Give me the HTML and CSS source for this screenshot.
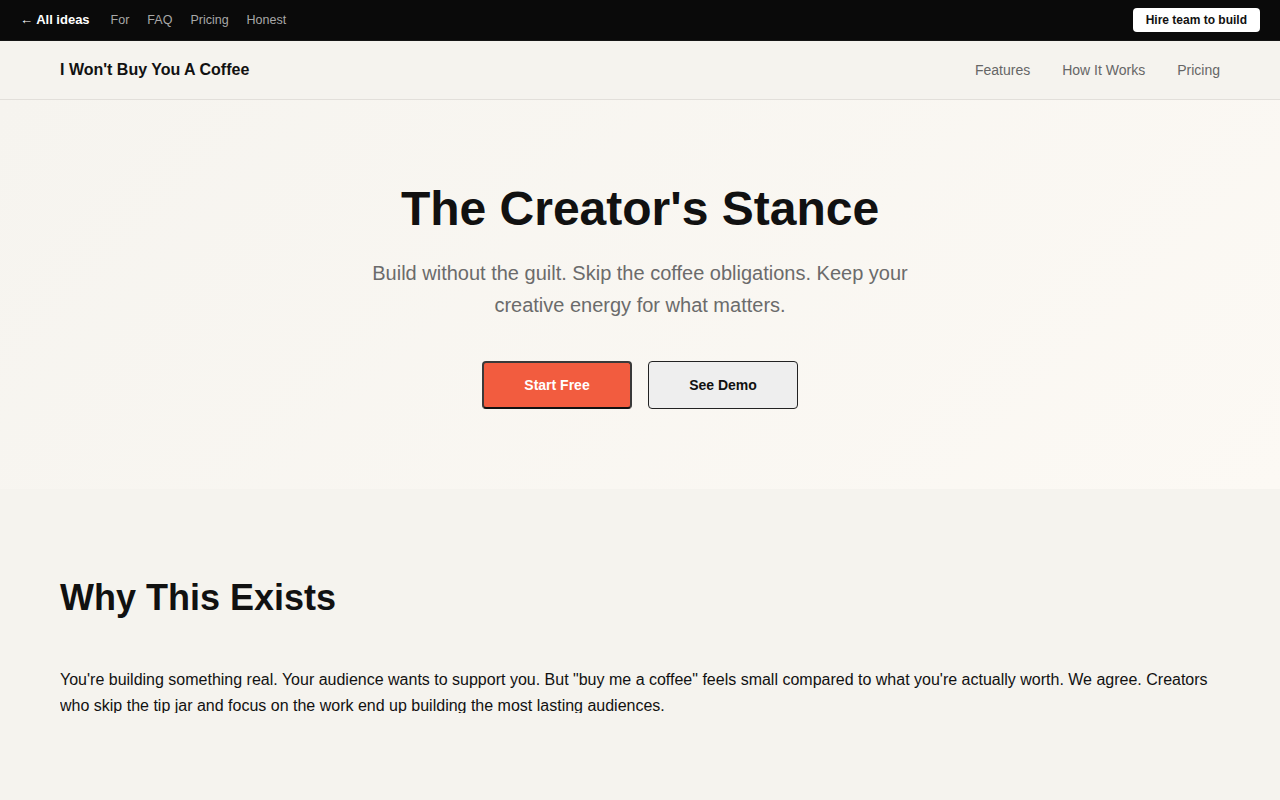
FILE: index.html
```html
<!DOCTYPE html>
<html lang="en">
<head>
    <meta charset="UTF-8">
    <meta name="viewport" content="width=device-width, initial-scale=1.0">
    <title>I Won't Buy You A Coffee</title>
    <link rel="stylesheet" href="styles.css">
</head>
<body>
    <div class="topbar">
        <div class="topbar-links">
            <a href="#" class="back">&larr; All ideas</a>
            <a href="#">For</a>
            <a href="#">FAQ</a>
            <a href="#">Pricing</a>
            <a href="#">Honest</a>
        </div>
        <a href="#" class="hire">Hire team to build</a>
    </div>
    <header class="nav">
        <div class="brand">I Won't Buy You A Coffee</div>
        <nav class="nav-links">
            <a href="#">Features</a>
            <a href="#">How It Works</a>
            <a href="#">Pricing</a>
        </nav>
    </header>
    <section class="hero">
        <h1>The Creator's Stance</h1>
        <p class="sub">Build without the guilt. Skip the coffee obligations. Keep your creative energy for what matters.</p>
        <div class="actions">
            <button class="btn primary">Start Free</button>
            <button class="btn secondary">See Demo</button>
        </div>
    </section>
    <section class="why">
        <h2>Why This Exists</h2>
        <div class="why-text">
            <p>You're building something real. Your audience wants to support you. But "buy me a coffee" feels small compared to what you're actually worth. We agree. Creators who skip the tip jar and focus on the work end up building the most lasting audiences.</p>
        </div>
    </section>
</body>
</html>
```
FILE: styles.css
```css
* {
    box-sizing: border-box;
}

body {
    margin: 0;
    background: #f5f3ee;
    font-family: "Liberation Sans", Arial, sans-serif;
    color: #111;
}

a {
    text-decoration: none;
}

.topbar {
    height: 41px;
    background: #0a0a0a;
    border-bottom: 1px solid #151515;
    display: flex;
    align-items: center;
    justify-content: space-between;
    padding: 0 20px;
    font-size: 12.5px;
}

.topbar-links {
    display: flex;
    align-items: baseline;
    gap: 18px;
    padding-bottom: 2px;
}

.topbar-links a {
    color: #a8a8a8;
}

.topbar-links .back {
    color: #fff;
    font-size: 13px;
    font-weight: bold;
    margin-right: 3px;
}

.hire {
    background: #fff;
    color: #111;
    font-size: 12px;
    font-weight: bold;
    padding: 5px 13px;
    border-radius: 4px;
}

.nav {
    height: 59px;
    display: flex;
    align-items: center;
    justify-content: space-between;
    padding: 0 60px;
    border-bottom: 1px solid #e2dfda;
}

.brand {
    font-size: 16px;
    font-weight: bold;
}

.nav-links {
    display: flex;
    gap: 32px;
}

.nav-links a {
    color: #666;
    font-size: 14px;
}

.hero {
    height: 389px;
    text-align: center;
    padding-top: 81px;
    background: linear-gradient(135deg, #f6f4ef 0%, #fcf9f4 100%);
}

.hero h1 {
    margin: 0;
    font-size: 48px;
    line-height: 56px;
}

.sub {
    width: 560px;
    margin: 20px auto 0;
    font-size: 20px;
    line-height: 32px;
    color: #6b6b6b;
}

.actions {
    display: flex;
    justify-content: center;
    gap: 16px;
    margin-top: 40px;
}

.btn {
    width: 150px;
    height: 48px;
    border-radius: 4px;
    font-family: inherit;
    font-size: 14px;
    font-weight: bold;
    cursor: pointer;
}

.primary {
    background: #f25c3f;
    color: #fff;
    border: 2px solid #3a3a3a;
    border-bottom-color: #111;
}

.secondary {
    background: #eeeeee;
    color: #111;
    border: 1px solid #222;
}

.why {
    padding: 89px 60px 0;
}

.why h2 {
    margin: 0;
    font-size: 36px;
    line-height: 40px;
}

.why-text {
    margin-top: 49px;
    height: 46px;
    overflow: hidden;
}

.why-text p {
    margin: 0;
    font-size: 16px;
    line-height: 26px;
}
```
